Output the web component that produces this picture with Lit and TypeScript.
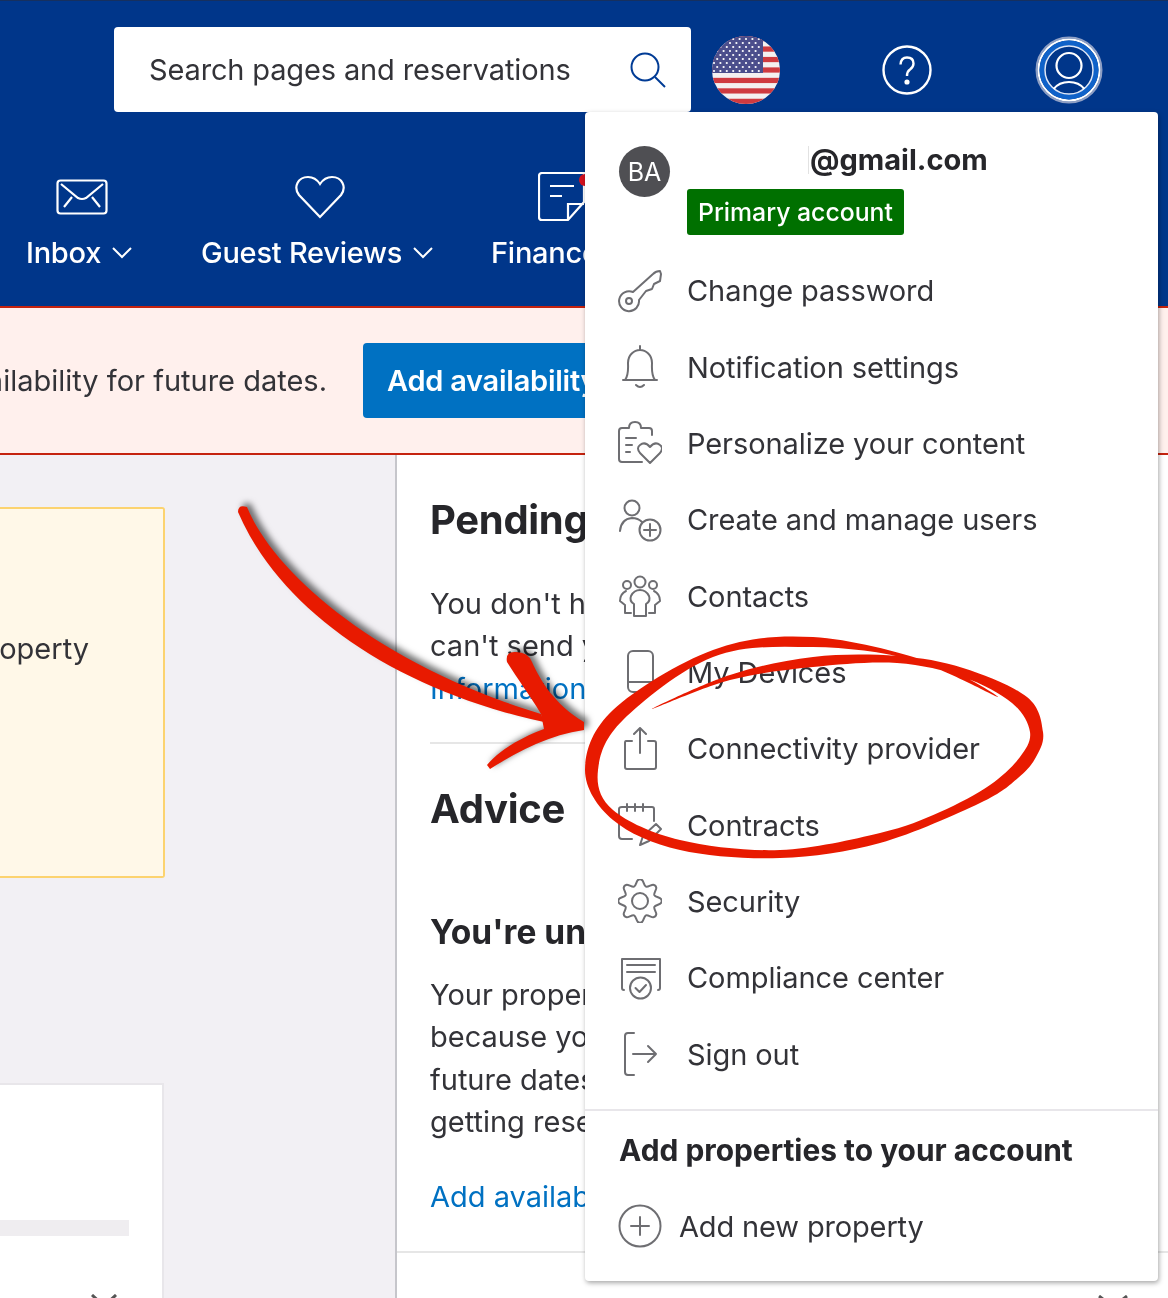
import { LitElement, html, css, svg } from "lit";
import { customElement } from "lit/decorators.js";

type P = [number, number];
function smooth(pts: P[]): string {
  const n = pts.length;
  let d = `M${pts[0][0]} ${pts[0][1]}`;
  for (let i = 0; i < n; i++) {
    const p0 = pts[(i - 1 + n) % n], p1 = pts[i], p2 = pts[(i + 1) % n], p3 = pts[(i + 2) % n];
    const c1x = p1[0] + (p2[0] - p0[0]) / 6, c1y = p1[1] + (p2[1] - p0[1]) / 6;
    const c2x = p2[0] - (p3[0] - p1[0]) / 6, c2y = p2[1] - (p3[1] - p1[1]) / 6;
    d += `C${c1x.toFixed(1)} ${c1y.toFixed(1)} ${c2x.toFixed(1)} ${c2y.toFixed(1)} ${p2[0]} ${p2[1]}`;
  }
  return d + "Z";
}

const loop: P[] = [
  [998, 697], [930, 662], [813, 637], [713, 650], [613, 710], [585, 770], [613, 820], [680, 850], [780, 858],
  [880, 843], [980, 803], [1018, 778], [1036, 757], [1043, 732], [1027, 697], [963, 668], [897, 656], [813, 657], [730, 675], [652, 709],
  [730, 680], [813, 667], [897, 663], [963, 677], [1012, 703], [1030, 732], [1020, 757], [990, 785], [940, 812], [880, 833], [780, 850],
  [680, 840], [613, 810], [598, 770], [623, 720], [713, 657], [813, 647], [913, 660],
];

const gearPts: P[] = [];
for (let i = 0; i < 8; i++) {
  const t = (i * Math.PI) / 4 - Math.PI / 2;
  const step = Math.PI / 30;
  for (const [a, r] of [[t - step, 21], [t + step, 21], [t + Math.PI / 8, 15.5]] as [number, number][]) {
    gearPts.push([+(22 + r * Math.cos(a)).toFixed(2), +(22 + r * Math.sin(a)).toFixed(2)]);
  }
}

const icons: Record<string, unknown> = {
  key: svg`<path d="M15 23L35 5Q38 2 42 2L43 5L42 12L36 15L34 20L28 22L21 31A10 10 0 1 1 15 23Z"/><circle cx="11" cy="32" r="3"/>`,
  bell: svg`<path d="M5 35H39M7 35C11 30 10 22 10 18C10 10 16 5 22 5C28 5 34 10 34 18C34 22 33 30 37 35M22 5V1M18 40Q22 44 26 40"/>`,
  person: svg`<path d="M24 41H4Q1 41 1 38V10Q1 7 4 7H11Q11 1 17 1Q23 1 23 7H31Q34 7 34 10V14M8 17H18M8 24H14M8 31H12"/><path d="M32 42L22 32Q18 27 22 24Q27 20 32 26Q37 20 42 24Q46 27 42 32Z"/>`,
  users: svg`<circle cx="14" cy="10" r="7.5"/><path d="M2 33Q3 21 14 20Q20 20 24 24"/><circle cx="32" cy="32" r="10.5"/><path d="M32 26V38M26 32H38"/>`,
  contacts: svg`<circle cx="22" cy="8" r="5.5"/><circle cx="9" cy="11" r="4"/><circle cx="35" cy="11" r="4"/><path d="M16 42H28V30Q33 27 31 22Q28 16 22 16Q16 16 13 22Q11 27 16 30ZM8 17Q2 20 2 27L7 31V39H13M36 17Q42 20 42 27L37 31V39H31"/>`,
  device: svg`<rect x="10" y="1" width="25" height="41" rx="5"/><path d="M10 32H35"/>`,
  share: svg`<path d="M14 14H8Q7 14 7 16V40Q7 42 9 42H36Q38 42 38 40V16Q38 14 36 14H30M22 1V26M16 7L22 1L28 7"/>`,
  contract: svg`<path d="M14 36H4Q1 36 1 33V6Q1 4 4 4H34Q36 4 36 6V18M9 1V8M17 1V8M25 1V8M22 42L25 33L38 21L43 26L31 38Z"/>`,
  gear: svg`<path d="${smooth(gearPts)}"/><circle cx="22" cy="22" r="8"/>`,
  compliance: svg`<path d="M6 34Q4 34 4 32V3H42V32Q42 34 40 34M9 9H37M9 16H37"/><circle cx="22.5" cy="32" r="10.5" fill="#fff"/><path d="M17.5 32L21.5 36L28 29"/>`,
  signout: svg`<path d="M16 1H10Q7 1 7 4V40Q7 43 10 43H16M15 22H38M30 14L38 22L30 30"/>`,
  plus: svg`<circle cx="22" cy="22" r="20.5"/><path d="M22 13V31M13 22H31"/>`,
};

const rows: [string, string][] = [
  ["key", "Change password"],
  ["bell", "Notification settings"],
  ["person", "Personalize your content"],
  ["users", "Create and manage users"],
  ["contacts", "Contacts"],
  ["device", "My Devices"],
  ["share", "Connectivity provider"],
  ["contract", "Contracts"],
  ["gear", "Security"],
  ["compliance", "Compliance center"],
  ["signout", "Sign out"],
];

const stripes = Array.from({ length: 13 }, (_, i) => i);
const stars: P[] = [];
for (let r = 0; r < 9; r++) for (let c = 0; c < (r % 2 ? 7 : 8); c++) stars.push([2 + c * 6.4 + (r % 2 ? 3.2 : 0), 3 + r * 4]);

const icon = (name: string) => html`<svg class="ico" viewBox="0 0 44 44">${icons[name]}</svg>`;
const chev = html`<svg class="chev" viewBox="0 0 20 12"><path d="M1 1L10 10L19 1"/></svg>`;

@customElement("app-root")
export class AppRoot extends LitElement {
  static styles = css`
    :host { display: block; width: 1168px; height: 1298px; font-family: Inter, "Liberation Sans", sans-serif; font-size: 29px; color: #333338; }
    * { box-sizing: border-box; }
    .page { position: relative; width: 1168px; height: 1298px; overflow: hidden; background: #fff; display: flex; flex-direction: column; filter: blur(0.4px); }
    header { height: 308px; flex: none; background: #00368a; border-top: 1px solid #16305f; border-bottom: 2px solid #c5230f; color: #fff; }
    .top { display: flex; align-items: center; height: 111px; padding: 26px 0 0 114px; }
    .search { width: 577px; height: 85px; background: #fff; border-radius: 4px; display: flex; align-items: center; justify-content: space-between; padding: 0 25px 0 35px; color: #333338; letter-spacing: -0.15px; }
    .search svg { width: 36px; height: 36px; fill: none; stroke: #003b95; stroke-width: 2; }
    .flag { width: 68px; height: 68px; margin-left: 21px; }
    .help { width: 50px; height: 50px; margin-left: 102px; }
    .avatar { width: 68px; height: 68px; margin-left: 103px; }
    nav { display: grid; grid-template-columns: 175px 290px auto; padding: 60px 0 0 26px; justify-items: start; }
    .item { display: flex; flex-direction: column; align-items: center; gap: 13px; }
    .nicon { height: 50px; display: flex; align-items: center; justify-content: center; padding-left: 6px; }
    .nicon svg { fill: none; stroke: #fff; stroke-width: 2.2; }
    .label { display: flex; align-items: center; gap: 11px; line-height: 36px; white-space: nowrap; font-weight: 500; letter-spacing: -0.25px; }
    .chev { width: 20px; height: 12px; fill: none; stroke: #fff; stroke-width: 2; }
    .banner { height: 147px; flex: none; background: #fff0ed; border-bottom: 2px solid #c5230f; display: flex; align-items: center; }
    .btext { width: 327px; display: flex; justify-content: flex-end; white-space: nowrap; }
    .bbtn { margin-left: 36px; height: 75px; width: 400px; background: #0071c2; color: #fff; border-radius: 4px; display: flex; align-items: center; padding-left: 24px; font-weight: 600; white-space: nowrap; letter-spacing: -0.25px; }
    main { flex: 1; display: flex; min-height: 0; }
    .left { width: 397px; flex: none; background: #f2f0f4; border-right: 2px solid #c6c6cb; padding-top: 52px; }
    .note { width: 165px; height: 371px; background: #fff8e8; border: 2px solid #fcd36f; border-left: 0; border-radius: 0 3px 3px 0; display: flex; justify-content: flex-end; padding: 122px 74px 0 0; white-space: nowrap; }
    .card { width: 164px; margin-top: 205px; height: 240px; background: #fff; border-top: 2px solid #e8e6ea; border-right: 2px solid #e8e6ea; padding-top: 135px; }
    .bar { width: 129px; height: 16px; background: #efedf0; }
    .cardchev { display: block; width: 26px; height: 14px; margin: 58px 0 0 91px; fill: none; stroke: #555; stroke-width: 3; }
    .right { flex: 1; min-width: 0; }
    .rin { padding: 40px 0 0 33px; width: 640px; }
    h1 { margin: 0; font-size: 40px; line-height: 50px; font-weight: 700; color: #26262a; letter-spacing: -0.3px; white-space: nowrap; }
    h2 { margin: 77px 0 0; font-size: 33.5px; line-height: 42px; font-weight: 700; color: #26262a; white-space: nowrap; }
    p { margin: 0; line-height: 42.4px; white-space: nowrap; }
    .p1 { margin-top: 38px; }
    .p2 { margin-top: 21px; }
    a { color: #0071c2; text-decoration: none; display: block; line-height: 42px; white-space: nowrap; }
    .rule { height: 2px; background: #e6e6e6; }
    .r1 { margin-top: 32px; }
    .adv { margin-top: 40px; }
    .lnk { margin-top: 33px; }
    .r2 { margin-top: 33px; }
    .rchev { display: block; width: 30px; height: 14px; margin: 42px 0 0 701px; fill: none; stroke: #555; stroke-width: 3; }
    .menu { position: absolute; left: 585px; top: 112px; width: 573px; height: 1169px; background: #fff; border-radius: 4px; box-shadow: 1px 2px 5px rgba(0, 0, 0, 0.35); display: flex; flex-direction: column; }
    .acct { display: flex; gap: 17px; padding: 34px 0 0 34px; height: 140.5px; }
    .ba { width: 51px; height: 51px; border-radius: 50%; background: #4f4f53; color: #fff; display: flex; align-items: center; justify-content: center; font-size: 25px; flex: none; }
    .mail { display: flex; align-items: center; font-weight: 700; line-height: 28px; color: #26262a; white-space: nowrap; }
    .redact { width: 122px; height: 28px; border-right: 1px solid #e2e2e2; margin-right: 1px; flex: none; }
    .tag { display: inline-block; margin-top: 15px; background: #007000; color: #fff; border-radius: 3px; height: 46px; line-height: 46px; padding: 0 11px; font-size: 24.8px; font-weight: 500; white-space: nowrap; }
    .rows { display: flex; flex-direction: column; padding-left: 33px; }
    .row { display: flex; align-items: center; gap: 25px; height: 76.35px; white-space: nowrap; letter-spacing: -0.08px; }
    .ico { width: 44px; height: 44px; flex: none; fill: none; stroke: #6e6e72; stroke-width: 2; stroke-linecap: round; stroke-linejoin: round; }
    .sep { margin-top: 17px; height: 2px; background: #e8e6ea; }
    .foot { padding: 18px 0 0 34px; }
    .foot b { display: block; line-height: 42px; font-size: 29.9px; font-weight: 700; color: #26262a; white-space: nowrap; }
    .add { display: flex; align-items: center; gap: 17px; height: 76px; margin-left: -1px; margin-top: 17px; white-space: nowrap; letter-spacing: -0.15px; }
    .draw { position: absolute; inset: 0; width: 1168px; height: 1298px; pointer-events: none; }
    .arrow { filter: drop-shadow(4px -3px 3px rgba(0, 0, 0, 0.55)); }
  `;

  render() {
    return html`<div class="page">
      <header>
        <div class="top">
          <div class="search">
            <span>Search pages and reservations</span>
            <svg viewBox="0 0 36 36"><circle cx="15" cy="15" r="13.5"/><path d="M25 25L35 35"/></svg>
          </div>
          <svg class="flag" viewBox="0 0 68 68">
            <defs><clipPath id="fc"><circle cx="34" cy="34" r="34"/></clipPath></defs>
            <g clip-path="url(#fc)">
              <rect width="68" height="68" fill="#f4f0f0"/>
              ${stripes.filter((i) => i % 2 === 0).map((i) => svg`<rect y="${i * 5.23}" width="68" height="5.23" fill="#cf3a40"/>`)}
              <rect width="51" height="37" fill="#4b4e8c"/>
              ${stars.map(([x, y]) => svg`<circle cx="${x}" cy="${y}" r="1.1" fill="#fff"/>`)}
            </g>
          </svg>
          <svg class="help" viewBox="0 0 50 50" fill="none" stroke="#fff" stroke-width="2.4">
            <circle cx="25" cy="25" r="23.5"/>
            <path d="M18.5 19.5Q19 12.5 25 12.5Q31.5 12.5 31.5 18.5Q31.5 22 28 24.5Q25 26.5 25 31"/>
            <circle cx="25" cy="37" r="1.4" fill="#fff"/>
          </svg>
          <svg class="avatar" viewBox="0 0 68 68" fill="none">
            <circle cx="34" cy="34" r="32.5" stroke="#8e9fc4" stroke-width="2"/>
            <circle cx="34" cy="34" r="30.5" stroke="#fff" stroke-width="2"/>
            <circle cx="34" cy="34" r="27" stroke="#0f62c9" stroke-width="5"/>
            <circle cx="34" cy="34" r="24" stroke="#dfe8f8" stroke-width="1.5"/>
            <circle cx="34" cy="29.5" r="12.5" stroke="#fff" stroke-width="2.2"/>
            <path d="M18.7 53Q24 46 34 46Q44 46 49.3 53" stroke="#fff" stroke-width="2.2"/>
          </svg>
        </div>
        <nav>
          <div class="item">
            <div class="nicon"><svg width="52" height="36" viewBox="0 0 52 36"><rect x="1.5" y="1.5" width="49" height="33" rx="3"/><path d="M5 5L22 19Q26 21 30 19L47 5M8 28L16 18M44 28L36 18"/></svg></div>
            <div class="label">Inbox ${chev}</div>
          </div>
          <div class="item">
            <div class="nicon"><svg width="50" height="44" viewBox="0 0 50 44"><path d="M25 42L4 20C-2 12 3 2 13 2C19 2 23 6 25 9C27 6 31 2 37 2C47 2 52 12 46 20Z"/></svg></div>
            <div class="label">Guest Reviews ${chev}</div>
          </div>
          <div class="item">
            <div class="nicon"><svg width="50" height="50" viewBox="0 0 50 50"><path d="M4 1H46V30L30 48H4Q1 48 1 45V4Q1 1 4 1ZM12 14H36M12 24H24M30 48V32H46"/><circle cx="47" cy="8" r="6" fill="#d4111e" stroke="none"/></svg></div>
            <div class="label">Finance ${chev}</div>
          </div>
        </nav>
      </header>
      <div class="banner">
        <div class="btext">availability for future dates.</div>
        <div class="bbtn">Add availability</div>
      </div>
      <main>
        <div class="left">
          <div class="note">property</div>
          <div class="card">
            <div class="bar"></div>
            <svg class="cardchev" viewBox="0 0 26 14"><path d="M1 1L13 12L25 1"/></svg>
          </div>
        </div>
        <div class="right">
          <div class="rin">
            <h1>Pending guest requests</h1>
            <p class="p1">You don't have any requests<br />can't send you any yet<br /><a>Information</a></p>
            <div class="rule r1"></div>
            <h1 class="adv">Advice</h1>
            <h2>You're unavailable</h2>
            <p class="p2">Your property isn't<br />because you have no<br />future dates and aren't<br />getting reservations</p>
            <a class="lnk">Add availability</a>
          </div>
          <div class="rule r2"></div>
          <svg class="rchev" viewBox="0 0 30 14"><path d="M1 1L15 12L29 1"/></svg>
        </div>
      </main>

      <div class="menu">
        <div class="acct">
          <div class="ba">BA</div>
          <div>
            <div class="mail"><span class="redact"></span>@gmail.com</div>
            <div class="tag">Primary account</div>
          </div>
        </div>
        <div class="rows">
          ${rows.map(([i, t]) => html`<div class="row">${icon(i)}<span>${t}</span></div>`)}
        </div>
        <div class="sep"></div>
        <div class="foot">
          <b>Add properties to your account</b>
          <div class="add">${icon("plus")}<span>Add new property</span></div>
        </div>
      </div>

      <svg class="draw" viewBox="0 0 1168 1298">
        <g class="arrow" fill="#e81a00">
          <path d="M238 512Q238 504 247 507C275 575 380 665 541 714L544 722C395 690 280 610 238 512Z"/>
          <path d="M507 662Q505 651 516 652Q528 652 532 662C540 680 555 705 584 722L584 730C550 735 520 750 490 769L487 765C500 750 520 738 544 729L541 714C530 695 518 680 507 662Z"/>
        </g>
        <path fill="#e81a00" d="${smooth(loop)}"/>
      </svg>
    </div>`;
  }
}
